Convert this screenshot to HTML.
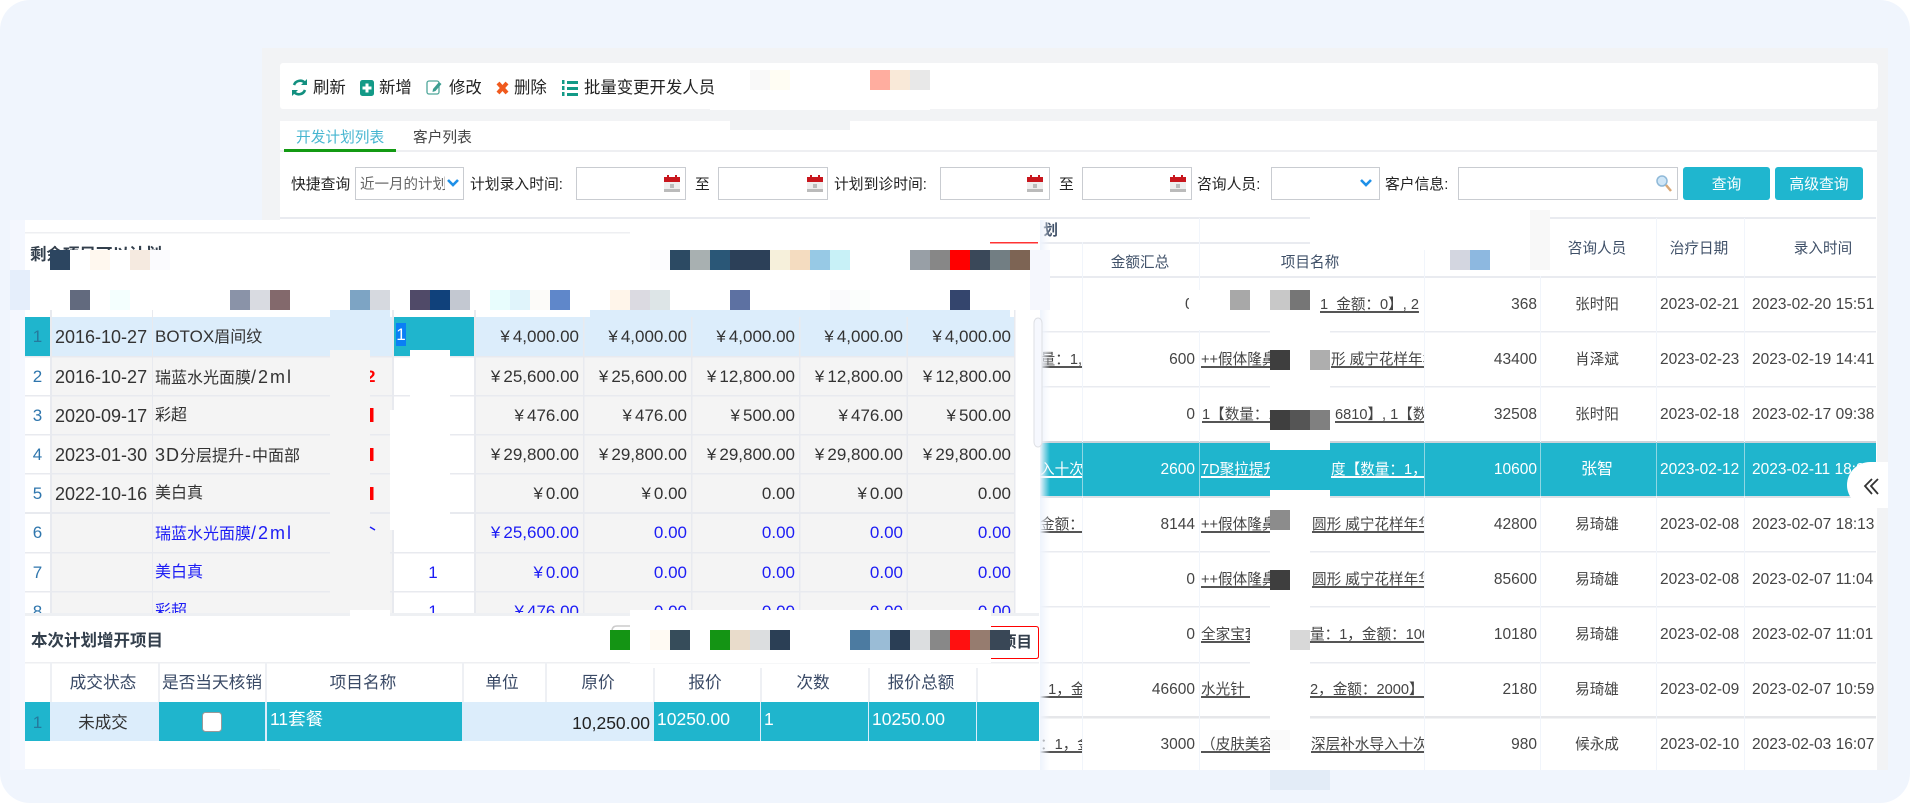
<!DOCTYPE html>
<html lang="zh"><head><meta charset="utf-8"><title>开发计划列表</title>
<style>
html,body{margin:0;padding:0;background:#fff}
#r{position:relative;width:1910px;height:803px;overflow:hidden;background:#fff;font-family:"Liberation Sans","Noto Sans CJK SC",sans-serif}
#card{position:absolute;left:0;top:0;width:1910px;height:803px;border-radius:30px;background:#f0f5fd}
svg.l{position:absolute;left:0;top:0;width:1910px;height:803px;display:block}
.t,.c{position:absolute;white-space:nowrap;height:20px;line-height:20px}
.c{overflow:hidden}
.tb{font-size:16.4px;color:#222;top:78px}
.f{font-size:14.8px;color:#222;top:175px}
.b{font-size:15.5px;color:#444}
.h{font-size:14.6px;color:#3f5068;text-align:center;width:100px}
.n{font-size:14.6px;color:#444;text-align:center;width:100px;left:1547px}
.u{font-size:14.6px;color:#444;text-decoration:underline;text-decoration-color:#555;text-decoration-thickness:1.5px;text-underline-offset:2px}
.w{color:#fff!important;text-decoration-color:#fff}
.d{font-size:18px;color:#333;left:55px}
.p{font-size:16px;color:#333;left:155px}
.p span{font-size:18px}
.p b{font-weight:normal;font-size:18px;letter-spacing:2px}
.i{font-size:17px;color:#2f76ad;left:25px;width:25px;text-align:center}
.m{font-size:17px;color:#333;text-align:right}
.m i{font-style:normal;margin-right:3px}
.bl{color:#1c1cf5!important}
.bh{font-size:16.7px;color:#3a4a66;top:673px;text-align:center;width:110px}
.bt{font-size:17.5px;color:#fff;top:709px}
</style></head><body>
<div id="r">
<div id="card"></div>

<svg class="l" viewBox="0 0 1910 803">
<rect x="262" y="48" width="1626" height="722" fill="#f2f3f5"/>
<rect x="280" y="63" width="1598" height="46" rx="3" fill="#fff"/>
<rect x="710" y="105" width="220" height="5" fill="#fff"/>
<rect x="280" y="121" width="1597" height="649" fill="#fff"/>
<rect x="730" y="121" width="120" height="9" fill="#f2f3f5"/>
<rect x="280" y="150" width="1597" height="2" fill="#eeeff2"/>
<rect x="284" y="149" width="112" height="3" fill="#139a13"/>
<rect x="750" y="70" width="20" height="20" fill="#f9f9f9"/><rect x="770" y="70" width="20" height="20" fill="#fffdf3"/>
<rect x="870" y="70" width="20" height="20" fill="#ffad9f"/><rect x="890" y="70" width="20" height="20" fill="#f9e9d8"/><rect x="910" y="70" width="20" height="20" fill="#e8e8e8"/>
<!-- toolbar icons -->
<g fill="none" stroke="#128f7f" stroke-width="2.6">
<path d="M294 85a6.500 6.500 0 0 1 11-2"/><path d="M305 90a6.500 6.500 0 0 1-11 2"/></g>
<path d="M307 79v6h-6zM292 96v-6h6z" fill="#128f7f"/>
<rect x="360" y="80" width="14" height="16" rx="2.500" fill="#139a87"/><path d="M367 83.500v9M362.500 88h9" stroke="#fff" stroke-width="3"/>
<rect x="427" y="81" width="12" height="13" rx="2" fill="none" stroke="#4fa69a" stroke-width="1.300"/><path d="M433 89l6-7 2.500 2-6 7-3 1z" fill="#3b9d90"/>
<path d="M498 83l9 10M507 83l-9 10" stroke="#f05a1e" stroke-width="4"/>
<g fill="#139a87"><rect x="567" y="81" width="11" height="3"/><rect x="567" y="87" width="11" height="3"/><rect x="567" y="93" width="11" height="3"/><rect x="562" y="80" width="2.500" height="4"/><rect x="562" y="86" width="2.500" height="4"/><rect x="562" y="92" width="2.500" height="4"/></g>
<!-- inputs -->
<g fill="#fff" stroke="#c9ccd1"><rect x="355.500" y="167.500" width="108" height="32"/><rect x="576.500" y="167.500" width="109" height="32"/><rect x="718.500" y="167.500" width="109" height="32"/><rect x="940.500" y="167.500" width="109" height="32"/><rect x="1082.500" y="167.500" width="109" height="32"/><rect x="1271.500" y="167.500" width="108" height="32"/><rect x="1458.500" y="167.500" width="219" height="32"/></g>
<g fill="none" stroke="#1e90e8" stroke-width="2.600"><path d="M448 180l5 5 5-5"/><path d="M1361 180l5 5 5-5"/></g>
<g><rect x="664" y="177" width="16" height="15" fill="#eee"/><rect x="664" y="177" width="16" height="5" fill="#c8161d"/><rect x="667" y="175" width="2" height="4" fill="#c8161d"/><rect x="675" y="175" width="2" height="4" fill="#c8161d"/><rect x="664" y="189" width="16" height="3" fill="#bbb"/><rect x="670" y="184" width="4" height="4" fill="#bbb"/></g>
<g><rect x="807" y="177" width="16" height="15" fill="#eee"/><rect x="807" y="177" width="16" height="5" fill="#c8161d"/><rect x="810" y="175" width="2" height="4" fill="#c8161d"/><rect x="818" y="175" width="2" height="4" fill="#c8161d"/><rect x="807" y="189" width="16" height="3" fill="#bbb"/><rect x="813" y="184" width="4" height="4" fill="#bbb"/></g>
<g><rect x="1027" y="177" width="16" height="15" fill="#eee"/><rect x="1027" y="177" width="16" height="5" fill="#c8161d"/><rect x="1030" y="175" width="2" height="4" fill="#c8161d"/><rect x="1038" y="175" width="2" height="4" fill="#c8161d"/><rect x="1027" y="189" width="16" height="3" fill="#bbb"/><rect x="1033" y="184" width="4" height="4" fill="#bbb"/></g>
<g><rect x="1170" y="177" width="16" height="15" fill="#eee"/><rect x="1170" y="177" width="16" height="5" fill="#c8161d"/><rect x="1173" y="175" width="2" height="4" fill="#c8161d"/><rect x="1181" y="175" width="2" height="4" fill="#c8161d"/><rect x="1170" y="189" width="16" height="3" fill="#bbb"/><rect x="1176" y="184" width="4" height="4" fill="#bbb"/></g>
<circle cx="1662" cy="181" r="5" fill="#cfe6f7" stroke="#8fb9d8" stroke-width="1.500"/><path d="M1666 185l5 6" stroke="#d9a877" stroke-width="2.500"/>
<rect x="1683" y="167" width="87" height="33" rx="3" fill="#1fb6cf"/><rect x="1775" y="167" width="88" height="33" rx="3" fill="#1fb6cf"/>
<!-- back table -->
<rect x="1040" y="442" width="836" height="54" fill="#1fb5cd"/>
<g fill="#e9ebf0">
<rect x="280" y="217" width="1596" height="2"/><rect x="1040" y="242" width="270" height="2"/>
<rect x="1040" y="276" width="836" height="2"/><rect x="1040" y="331" width="836" height="1.500"/><rect x="1040" y="386" width="836" height="1.500"/><rect x="1040" y="441" width="836" height="2" fill="#ccd3da"/><rect x="1040" y="496" width="836" height="2" fill="#dde1e6"/><rect x="1040" y="551" width="836" height="1.500"/><rect x="1040" y="606" width="836" height="1.500"/><rect x="1040" y="662" width="836" height="1.500"/><rect x="1040" y="716" width="836" height="2.500" fill="#e6e7ea"/></g>
<g fill="#f1f5fb">
<rect x="1082" y="242" width="1" height="528"/><rect x="1199" y="218" width="1" height="552"/><rect x="1424" y="250" width="1" height="520"/><rect x="1540" y="276" width="1" height="494"/><rect x="1656" y="218" width="1" height="552"/><rect x="1744" y="218" width="1" height="552"/></g>
<g fill="#8fd6e3"><rect x="1082" y="442" width="1" height="54"/><rect x="1199" y="442" width="1" height="54"/><rect x="1424" y="442" width="1" height="54"/><rect x="1540" y="442" width="1" height="54"/><rect x="1656" y="442" width="1" height="54"/><rect x="1744" y="442" width="1" height="54"/></g>
</svg>

<!-- toolbar text -->
<div class="t tb" style="left:313px">刷新</div><div class="t tb" style="left:379px">新增</div><div class="t tb" style="left:449px">修改</div><div class="t tb" style="left:514px">删除</div><div class="t tb" style="left:584px">批量变更开发人员</div>
<div class="t" style="left:296px;top:128px;font-size:14.7px;color:#46b5d0">开发计划列表</div>
<div class="t" style="left:413px;top:128px;font-size:14.7px;color:#444">客户列表</div>
<div class="t f" style="left:291px">快捷查询</div>
<div class="c" style="left:360px;top:175px;width:85px;font-size:14.5px;color:#666">近一月的计划</div>
<div class="t f" style="left:470px">计划录入时间:</div><div class="t f" style="left:695px">至</div>
<div class="t f" style="left:834px">计划到诊时间:</div><div class="t f" style="left:1059px">至</div>
<div class="t f" style="left:1197px">咨询人员:</div><div class="t f" style="left:1385px">客户信息:</div>
<div class="t" style="left:1683px;width:87px;top:175px;text-align:center;font-size:14.8px;color:#fff">查询</div>
<div class="t" style="left:1775px;width:88px;top:175px;text-align:center;font-size:14.8px;color:#fff">高级查询</div>

<!-- back table header -->
<div class="c h" style="left:1040px;top:221px;width:18px;color:#3f5068;text-align:right;font-weight:bold">划</div>
<div class="t h" style="left:1090px;top:253px">金额汇总</div><div class="t h" style="left:1260px;top:253px">项目名称</div>
<div class="t h" style="left:1547px;top:239px">咨询人员</div><div class="t h" style="left:1649px;top:239px">治疗日期</div><div class="t h" style="left:1773px;top:239px">录入时间</div>

<!-- col 1 -->
<div class="c u" style="left:1040px;top:350px;width:42px;text-align:right">量：1,</div>
<div class="c u w" style="left:1040px;top:460px;width:42px;text-align:right">入十次</div>
<div class="c u" style="left:1040px;top:515px;width:42px">金额：8</div>
<div class="c u" style="left:1040px;top:680px;width:42px;text-align:left">&nbsp;&nbsp;1，金额</div>
<div class="c u" style="left:1040px;top:735px;width:42px">：1，金额</div>
<!-- amount -->
<div class="c b" style="left:1100px;width:89px;top:295px"><span style="margin-left:85px">0</span></div>
<div class="t b" style="right:715px;top:350px">600</div><div class="t b" style="right:715px;top:405px">0</div><div class="t b w" style="right:715px;top:460px">2600</div><div class="t b" style="right:715px;top:515px">8144</div><div class="t b" style="right:715px;top:570px">0</div><div class="t b" style="right:715px;top:625px">0</div><div class="t b" style="right:715px;top:680px">46600</div><div class="t b" style="right:715px;top:735px">3000</div>
<!-- names -->
<div class="c u" style="left:1320px;top:295px;width:104px">1&nbsp;&nbsp;金额：0】, 2</div>
<div class="c u" style="left:1201px;top:350px;width:69px">++假体隆鼻</div><div class="c u" style="left:1331px;top:350px;width:93px">形 威宁花样年华</div>
<div class="c u" style="left:1202px;top:405px;width:68px">1【数量：1</div><div class="c u" style="left:1335px;top:405px;width:89px">6810】, 1【数量</div>
<div class="c u w" style="left:1201px;top:460px;width:69px">7D聚拉提升</div><div class="c u w" style="left:1331px;top:460px;width:93px">度【数量：1，金额</div>
<div class="c u" style="left:1201px;top:515px;width:69px">++假体隆鼻</div><div class="c u" style="left:1312px;top:515px;width:112px">圆形 威宁花样年华</div>
<div class="c u" style="left:1201px;top:570px;width:69px">++假体隆鼻</div><div class="c u" style="left:1312px;top:570px;width:112px">圆形 威宁花样年华</div>
<div class="c u" style="left:1201px;top:625px;width:49px">全家宝套餐</div><div class="c u" style="left:1310px;top:625px;width:114px">量：1，金额：1000</div>
<div class="c u" style="left:1201px;top:680px;width:49px">水光针&nbsp;&nbsp;</div><div class="c u" style="left:1310px;top:680px;width:114px">2，金额：2000】,</div>
<div class="c u" style="left:1201px;top:735px;width:69px">（皮肤美容</div><div class="c u" style="left:1311px;top:735px;width:113px">深层补水导入十次</div>
<!-- numbers -->
<div class="t b" style="right:373px;top:295px">368</div><div class="t b" style="right:373px;top:350px">43400</div><div class="t b" style="right:373px;top:405px">32508</div><div class="t b w" style="right:373px;top:460px">10600</div><div class="t b" style="right:373px;top:515px">42800</div><div class="t b" style="right:373px;top:570px">85600</div><div class="t b" style="right:373px;top:625px">10180</div><div class="t b" style="right:373px;top:680px">2180</div><div class="t b" style="right:373px;top:735px">980</div>
<div class="t n" style="top:295px">张时阳</div><div class="t n" style="top:350px">肖泽斌</div><div class="t n" style="top:405px">张时阳</div><div class="t n w" style="top:460px;font-size:16px">张智</div><div class="t n" style="top:515px">易琦雄</div><div class="t n" style="top:570px">易琦雄</div><div class="t n" style="top:625px">易琦雄</div><div class="t n" style="top:680px">易琦雄</div><div class="t n" style="top:735px">候永成</div>
<div class="t b" style="left:1660px;top:295px">2023-02-21</div><div class="t b" style="left:1660px;top:350px">2023-02-23</div><div class="t b" style="left:1660px;top:405px">2023-02-18</div><div class="t b w" style="left:1660px;top:460px">2023-02-12</div><div class="t b" style="left:1660px;top:515px">2023-02-08</div><div class="t b" style="left:1660px;top:570px">2023-02-08</div><div class="t b" style="left:1660px;top:625px">2023-02-08</div><div class="t b" style="left:1660px;top:680px">2023-02-09</div><div class="t b" style="left:1660px;top:735px">2023-02-10</div>
<div class="c b" style="left:1752px;top:295px;width:124px">2023-02-20 15:51</div><div class="c b" style="left:1752px;top:350px;width:124px">2023-02-19 14:41</div><div class="c b" style="left:1752px;top:405px;width:124px">2023-02-17 09:38</div><div class="c b w" style="left:1752px;top:460px;width:124px">2023-02-11 18:21</div><div class="c b" style="left:1752px;top:515px;width:124px">2023-02-07 18:13</div><div class="c b" style="left:1752px;top:570px;width:124px">2023-02-07 11:04</div><div class="c b" style="left:1752px;top:625px;width:124px">2023-02-07 11:01</div><div class="c b" style="left:1752px;top:680px;width:124px">2023-02-07 10:59</div><div class="c b" style="left:1752px;top:735px;width:124px">2023-02-03 16:07</div>

<!-- back patches + front panel -->
<svg class="l" viewBox="0 0 1910 803">
<rect x="1310" y="210" width="220" height="40" fill="#fff"/><rect x="1425" y="250" width="105" height="20" fill="#fff"/>
<rect x="1530" y="210" width="20" height="60" fill="#f8f8f8"/>
<rect x="1450" y="250" width="20" height="20" fill="#d3d6e0"/><rect x="1470" y="250" width="20" height="20" fill="#8db8e0"/>
<rect x="1190" y="290" width="130" height="40" fill="#fff"/><rect x="1200" y="279" width="120" height="52" fill="#fff"/>
<rect x="1230" y="290" width="20" height="20" fill="#a8a8a8"/><rect x="1270" y="290" width="20" height="20" fill="#c8c8c8"/><rect x="1290" y="290" width="20" height="20" fill="#767676"/>
<rect x="1270" y="330" width="60" height="120" fill="#fff"/>
<rect x="1270" y="350" width="20" height="20" fill="#3e3e3e"/><rect x="1310" y="350" width="20" height="20" fill="#aeaeae"/>
<rect x="1270" y="410" width="20" height="20" fill="#3f3f3f"/><rect x="1290" y="410" width="20" height="20" fill="#555"/><rect x="1310" y="410" width="20" height="20" fill="#808080"/>
<rect x="1270" y="450" width="60" height="40" fill="#1fb5cd"/><rect x="1270" y="490" width="60" height="8" fill="#fff"/>
<rect x="1270" y="498" width="40" height="272" fill="#fff"/><rect x="1250" y="608" width="20" height="108" fill="#fff"/>
<rect x="1270" y="510" width="20" height="20" fill="#8c8c8c"/>
<rect x="1270" y="570" width="20" height="20" fill="#3e3e3e"/>
<rect x="1290" y="630" width="20" height="20" fill="#d8d8d8"/>
<rect x="1270" y="730" width="20" height="20" fill="#fafafa"/>
<rect x="1270" y="770" width="60" height="20" fill="#e3ecf7"/>
<rect x="10" y="220" width="15" height="550" fill="#f4f7fe"/>
<defs><linearGradient id="gr"><stop offset="0" stop-color="#eef3fc"/><stop offset="1" stop-color="#eef3fc" stop-opacity="0"/></linearGradient></defs>
<rect x="1040" y="220" width="10" height="550" fill="url(#gr)"/>
<rect x="25" y="220" width="1014" height="549" fill="#fff"/>
<rect x="25" y="232" width="605" height="1.500" fill="#eeeff2"/>
<rect x="990" y="242" width="48" height="1.500" fill="#f33"/>
<!-- row backgrounds -->
<rect x="52" y="357" width="342" height="256" fill="#f4f4f4"/>
<rect x="475" y="357" width="539" height="256" fill="#f4f4f4"/>
<rect x="52" y="317" width="342" height="40" fill="#dcedfb"/>
<rect x="475" y="317" width="539" height="40" fill="#dcedfb"/>
<rect x="330" y="310" width="60" height="7" fill="#dcedfb"/><rect x="590" y="310" width="420" height="7" fill="#dcedfb"/>
<rect x="25" y="317" width="25" height="39" fill="#1fb5cd"/>
<rect x="394" y="317" width="80" height="39" fill="#1fb5cd"/>
<g fill="#e8eaef">
<rect x="25" y="356" width="989" height="1.500"/><rect x="25" y="395" width="989" height="1.500"/><rect x="25" y="434" width="989" height="1.500"/><rect x="25" y="473" width="989" height="1.500"/><rect x="25" y="512" width="989" height="2"/><rect x="25" y="552" width="989" height="1.500"/><rect x="25" y="591" width="989" height="1.500"/>
<rect x="50" y="310" width="2" height="303"/><rect x="152" y="310" width="1" height="303"/><rect x="392" y="310" width="2" height="303"/><rect x="474" y="310" width="2" height="303"/><rect x="583" y="317" width="1.500" height="296"/><rect x="691" y="317" width="1.500" height="296"/><rect x="799" y="317" width="1.500" height="296"/><rect x="906.500" y="317" width="1.500" height="296"/><rect x="1014" y="310" width="1.500" height="303"/></g>
</svg>

<!-- front table text -->
<div class="t i" style="top:327px;color:#257a9e">1</div><div class="t i" style="top:367px">2</div><div class="t i" style="top:406px">3</div><div class="t i" style="top:445px">4</div><div class="t i" style="top:484px">5</div><div class="t i" style="top:523px">6</div><div class="t i" style="top:563px">7</div><div class="t i" style="top:602px">8</div>
<div class="t d" style="top:327px">2016-10-27</div><div class="t d" style="top:367px">2016-10-27</div><div class="t d" style="top:406px">2020-09-17</div><div class="t d" style="top:445px">2023-01-30</div><div class="t d" style="top:484px">2022-10-16</div>
<div class="t p" style="top:327px"><span style="font-size:17px">BOTOX</span>眉间纹</div>
<div class="t p" style="top:367px">瑞蓝水光面膜<b>/2ml</b></div>
<div class="t p" style="top:406px">彩超</div>
<div class="t p" style="top:445px"><b style="letter-spacing:1px">3D</b>分层提升<b style="letter-spacing:0;padding:0 1px">-</b>中面部</div>
<div class="t p" style="top:484px">美白真</div>
<div class="t p bl" style="top:523px">瑞蓝水光面膜<b>/2ml</b></div>
<div class="t p bl" style="top:563px">美白真</div>
<div class="t p bl" style="top:602px">彩超</div>
<div style="position:absolute;left:396px;top:323px;width:10px;height:23px;background:#0a7ff5;color:#fff;font-size:17px;line-height:23px;text-align:center">1</div>
<div class="t" style="left:423px;width:20px;top:563px;text-align:center;font-size:17px;color:#1c1cf5">1</div>
<div class="t" style="left:423px;width:20px;top:602px;text-align:center;font-size:17px;color:#1c1cf5">1</div>
<!-- money -->
<div class="t m" style="right:1331px;top:327px"><i>¥</i>4,000.00</div><div class="t m" style="right:1223px;top:327px"><i>¥</i>4,000.00</div><div class="t m" style="right:1115px;top:327px"><i>¥</i>4,000.00</div><div class="t m" style="right:1007px;top:327px"><i>¥</i>4,000.00</div><div class="t m" style="right:899px;top:327px"><i>¥</i>4,000.00</div>
<div class="t m" style="right:1331px;top:367px"><i>¥</i>25,600.00</div><div class="t m" style="right:1223px;top:367px"><i>¥</i>25,600.00</div><div class="t m" style="right:1115px;top:367px"><i>¥</i>12,800.00</div><div class="t m" style="right:1007px;top:367px"><i>¥</i>12,800.00</div><div class="t m" style="right:899px;top:367px"><i>¥</i>12,800.00</div>
<div class="t m" style="right:1331px;top:406px"><i>¥</i>476.00</div><div class="t m" style="right:1223px;top:406px"><i>¥</i>476.00</div><div class="t m" style="right:1115px;top:406px"><i>¥</i>500.00</div><div class="t m" style="right:1007px;top:406px"><i>¥</i>476.00</div><div class="t m" style="right:899px;top:406px"><i>¥</i>500.00</div>
<div class="t m" style="right:1331px;top:445px"><i>¥</i>29,800.00</div><div class="t m" style="right:1223px;top:445px"><i>¥</i>29,800.00</div><div class="t m" style="right:1115px;top:445px"><i>¥</i>29,800.00</div><div class="t m" style="right:1007px;top:445px"><i>¥</i>29,800.00</div><div class="t m" style="right:899px;top:445px"><i>¥</i>29,800.00</div>
<div class="t m" style="right:1331px;top:484px"><i>¥</i>0.00</div><div class="t m" style="right:1223px;top:484px"><i>¥</i>0.00</div><div class="t m" style="right:1115px;top:484px">0.00</div><div class="t m" style="right:1007px;top:484px"><i>¥</i>0.00</div><div class="t m" style="right:899px;top:484px">0.00</div>
<div class="t m bl" style="right:1331px;top:523px"><i>¥</i>25,600.00</div><div class="t m bl" style="right:1223px;top:523px">0.00</div><div class="t m bl" style="right:1115px;top:523px">0.00</div><div class="t m bl" style="right:1007px;top:523px">0.00</div><div class="t m bl" style="right:899px;top:523px">0.00</div>
<div class="t m bl" style="right:1331px;top:563px"><i>¥</i>0.00</div><div class="t m bl" style="right:1223px;top:563px">0.00</div><div class="t m bl" style="right:1115px;top:563px">0.00</div><div class="t m bl" style="right:1007px;top:563px">0.00</div><div class="t m bl" style="right:899px;top:563px">0.00</div>
<div class="t m bl" style="right:1331px;top:602px"><i>¥</i>476.00</div><div class="t m bl" style="right:1223px;top:602px">0.00</div><div class="t m bl" style="right:1115px;top:602px">0.00</div><div class="t m bl" style="right:1007px;top:602px">0.00</div><div class="t m bl" style="right:899px;top:602px">0.00</div>
<div class="t" style="left:30px;top:245px;font-size:16.5px;font-weight:bold;color:#333f4c">剩余项目可以计划</div>

<!-- top mosaics, patches, bottom panel -->
<svg class="l" viewBox="0 0 1910 803">
<rect x="50" y="250" width="125" height="20" fill="#fff"/>
<rect x="50" y="250" width="20" height="20" fill="#2c4560"/><rect x="90" y="250" width="20" height="20" fill="#fff8ef"/><rect x="130" y="250" width="20" height="20" fill="#f5eae0"/><rect x="150" y="250" width="20" height="20" fill="#fbfbfe"/>
<rect x="650" y="250" width="20" height="20" fill="#fcfcfe"/><rect x="670" y="250" width="20" height="20" fill="#2c4a63"/><rect x="690" y="250" width="20" height="20" fill="#a8b0b1"/><rect x="710" y="250" width="20" height="20" fill="#2a5777"/><rect x="730" y="250" width="40" height="20" fill="#2c4058"/><rect x="770" y="250" width="20" height="20" fill="#f6f0db"/><rect x="790" y="250" width="20" height="20" fill="#f4dcc0"/><rect x="810" y="250" width="20" height="20" fill="#97c9e5"/><rect x="830" y="250" width="20" height="20" fill="#c8f1f7"/>
<rect x="910" y="250" width="20" height="20" fill="#989fa6"/><rect x="930" y="250" width="20" height="20" fill="#878787"/><rect x="950" y="250" width="20" height="20" fill="#f00"/><rect x="970" y="250" width="20" height="20" fill="#3a4859"/><rect x="990" y="250" width="20" height="20" fill="#727e83"/><rect x="1010" y="250" width="20" height="20" fill="#7d6454"/>
<rect x="1030" y="250" width="20" height="60" fill="#f5f7fd"/>
<rect x="10" y="270" width="20" height="40" fill="#e5eefb"/>
<rect x="70" y="290" width="20" height="20" fill="#626a7e"/><rect x="110" y="290" width="20" height="20" fill="#f4fffe"/><rect x="230" y="290" width="20" height="20" fill="#8a93a8"/><rect x="250" y="290" width="20" height="20" fill="#d9dbe1"/><rect x="270" y="290" width="20" height="20" fill="#83696c"/><rect x="350" y="290" width="20" height="20" fill="#7da4c4"/><rect x="370" y="290" width="20" height="20" fill="#d6d9df"/><rect x="410" y="290" width="20" height="20" fill="#504a68"/><rect x="430" y="290" width="20" height="20" fill="#10417b"/><rect x="450" y="290" width="20" height="20" fill="#c3c8d1"/><rect x="490" y="290" width="20" height="20" fill="#e8fdfd"/><rect x="510" y="290" width="20" height="20" fill="#e0f4fb"/><rect x="530" y="290" width="20" height="20" fill="#fcfbf9"/><rect x="550" y="290" width="20" height="20" fill="#5f87ca"/><rect x="610" y="290" width="20" height="20" fill="#fff5ea"/><rect x="630" y="290" width="20" height="20" fill="#dbdae1"/><rect x="650" y="290" width="20" height="20" fill="#dde5e7"/><rect x="730" y="290" width="20" height="20" fill="#5d71a2"/><rect x="830" y="290" width="20" height="20" fill="#fafafc"/><rect x="850" y="290" width="20" height="20" fill="#fbfefc"/><rect x="950" y="290" width="20" height="20" fill="#34456d"/>
<!-- patches over the counts column -->
<rect x="330" y="350" width="40" height="260" fill="#f4f4f4"/><rect x="370" y="516" width="20" height="94" fill="#f4f4f4"/>
<rect x="410" y="350" width="40" height="180" fill="#fff"/><rect x="390" y="410" width="20" height="120" fill="#fff"/>
<rect x="350" y="610" width="40" height="7" fill="#fff"/>
<rect x="370" y="408" width="3.500" height="14" fill="#f00"/><rect x="370" y="448" width="3.500" height="13" fill="#f00"/><rect x="370" y="487" width="3.500" height="13" fill="#f00"/>
<path d="M370 527l5 3" stroke="#1c1cf5" stroke-width="1.500"/>
<!-- right scrollbar edge -->
<rect x="1034" y="318" width="8" height="129" rx="5" fill="#f6f8fe" stroke="#dddfe4"/>
<!-- bottom panel -->
<rect x="25" y="613" width="1014" height="156" fill="#fff"/>
<rect x="25" y="613" width="1014" height="3" fill="#eef0f3"/>
<rect x="350" y="610" width="40" height="7" fill="#fff"/>
<rect x="25" y="662" width="1014" height="1.500" fill="#eeeff2"/>
<g fill="#eef0f4"><rect x="50" y="662" width="2" height="40"/><rect x="158" y="662" width="2" height="40"/><rect x="265" y="662" width="2" height="40"/><rect x="462" y="662" width="2" height="40"/><rect x="545" y="662" width="2" height="40"/><rect x="653" y="668" width="2" height="34"/><rect x="760" y="668" width="2" height="34"/><rect x="868" y="668" width="2" height="34"/><rect x="976" y="668" width="2" height="34"/></g>
<rect x="25" y="702" width="1014" height="39" fill="#dcedfb"/>
<rect x="25" y="702" width="25" height="39" fill="#1fb5cd"/>
<rect x="159" y="702" width="106" height="39" fill="#1fb5cd"/><rect x="267" y="702" width="195" height="39" fill="#1fb5cd"/>
<rect x="654" y="702" width="106" height="39" fill="#1fb5cd"/><rect x="761" y="702" width="107" height="39" fill="#1fb5cd"/><rect x="869" y="702" width="107" height="39" fill="#1fb5cd"/><rect x="977" y="702" width="62" height="39" fill="#1fb5cd"/>
<rect x="202.500" y="712.500" width="19" height="19" rx="3" fill="#fff" stroke="#999"/>
<path d="M612 645v-14q0-5 5-5h13" fill="none" stroke="#ccc" stroke-width="1.500"/>
<rect x="630" y="610" width="361" height="53" fill="#fff"/>
<path d="M991 626.500h45q2.500 0 2.500 2.500v27q0 2.500-2.500 2.500h-45" fill="none" stroke="#f00"/>
<rect x="610" y="630" width="20" height="20" fill="#149414"/><rect x="650" y="630" width="20" height="20" fill="#fffaf3"/><rect x="670" y="630" width="20" height="20" fill="#364c5a"/><rect x="710" y="630" width="20" height="20" fill="#149414"/><rect x="730" y="630" width="20" height="20" fill="#e9dccb"/><rect x="750" y="630" width="20" height="20" fill="#dcdee0"/><rect x="770" y="630" width="20" height="20" fill="#2b3f55"/>
<rect x="850" y="630" width="20" height="20" fill="#4c7ba1"/><rect x="870" y="630" width="20" height="20" fill="#9abcd6"/><rect x="890" y="630" width="20" height="20" fill="#2a3e55"/><rect x="910" y="630" width="20" height="20" fill="#dcdee0"/><rect x="930" y="630" width="20" height="20" fill="#888"/><rect x="950" y="630" width="20" height="20" fill="#ff1010"/><rect x="970" y="630" width="20" height="20" fill="#967c6f"/>
<!-- expand button -->
<path d="M1888 462h-18a23 23 0 0 0 0 46h18z" fill="#fff"/>
<path d="M1872 479l-7 7 7 8M1878 479l-7 7 7 8" fill="none" stroke="#333" stroke-width="1.800"/>
</svg>
<!-- clipped red-cell number and last tab label -->
<div class="c" style="left:370px;top:367px;width:6px;font-size:17px;font-weight:bold;color:#f00"><span style="margin-left:-4px">2</span></div>
<div class="c" style="left:1001px;top:633px;width:33px;font-size:15.5px;font-weight:bold;color:#333f4c">项目</div>
<svg class="l" viewBox="0 0 1910 803"><rect x="990" y="630" width="20" height="20" fill="#394756"/></svg>
<div class="t" style="left:31px;top:631px;font-size:16.5px;font-weight:bold;color:#333f4c">本次计划增开项目</div>
<div class="t bh" style="left:48px">成交状态</div><div class="t bh" style="left:157px">是否当天核销</div><div class="t bh" style="left:308px">项目名称</div><div class="t bh" style="left:447px">单位</div><div class="t bh" style="left:543px">原价</div><div class="t bh" style="left:650px">报价</div><div class="t bh" style="left:758px">次数</div><div class="t bh" style="left:866px">报价总额</div>
<div class="t i" style="top:713px;color:#257a9e">1</div>
<div class="t" style="left:48px;width:110px;top:713px;text-align:center;font-size:16.5px;color:#333">未成交</div>
<div class="t bt" style="left:270px">11套餐</div>
<div class="t" style="right:1260px;top:713px;font-size:17.5px;color:#222">10,250.00</div>
<div class="t bt" style="left:657px">10250.00</div><div class="t bt" style="left:764px">1</div><div class="t bt" style="left:872px">10250.00</div>
</div>
</body></html>
